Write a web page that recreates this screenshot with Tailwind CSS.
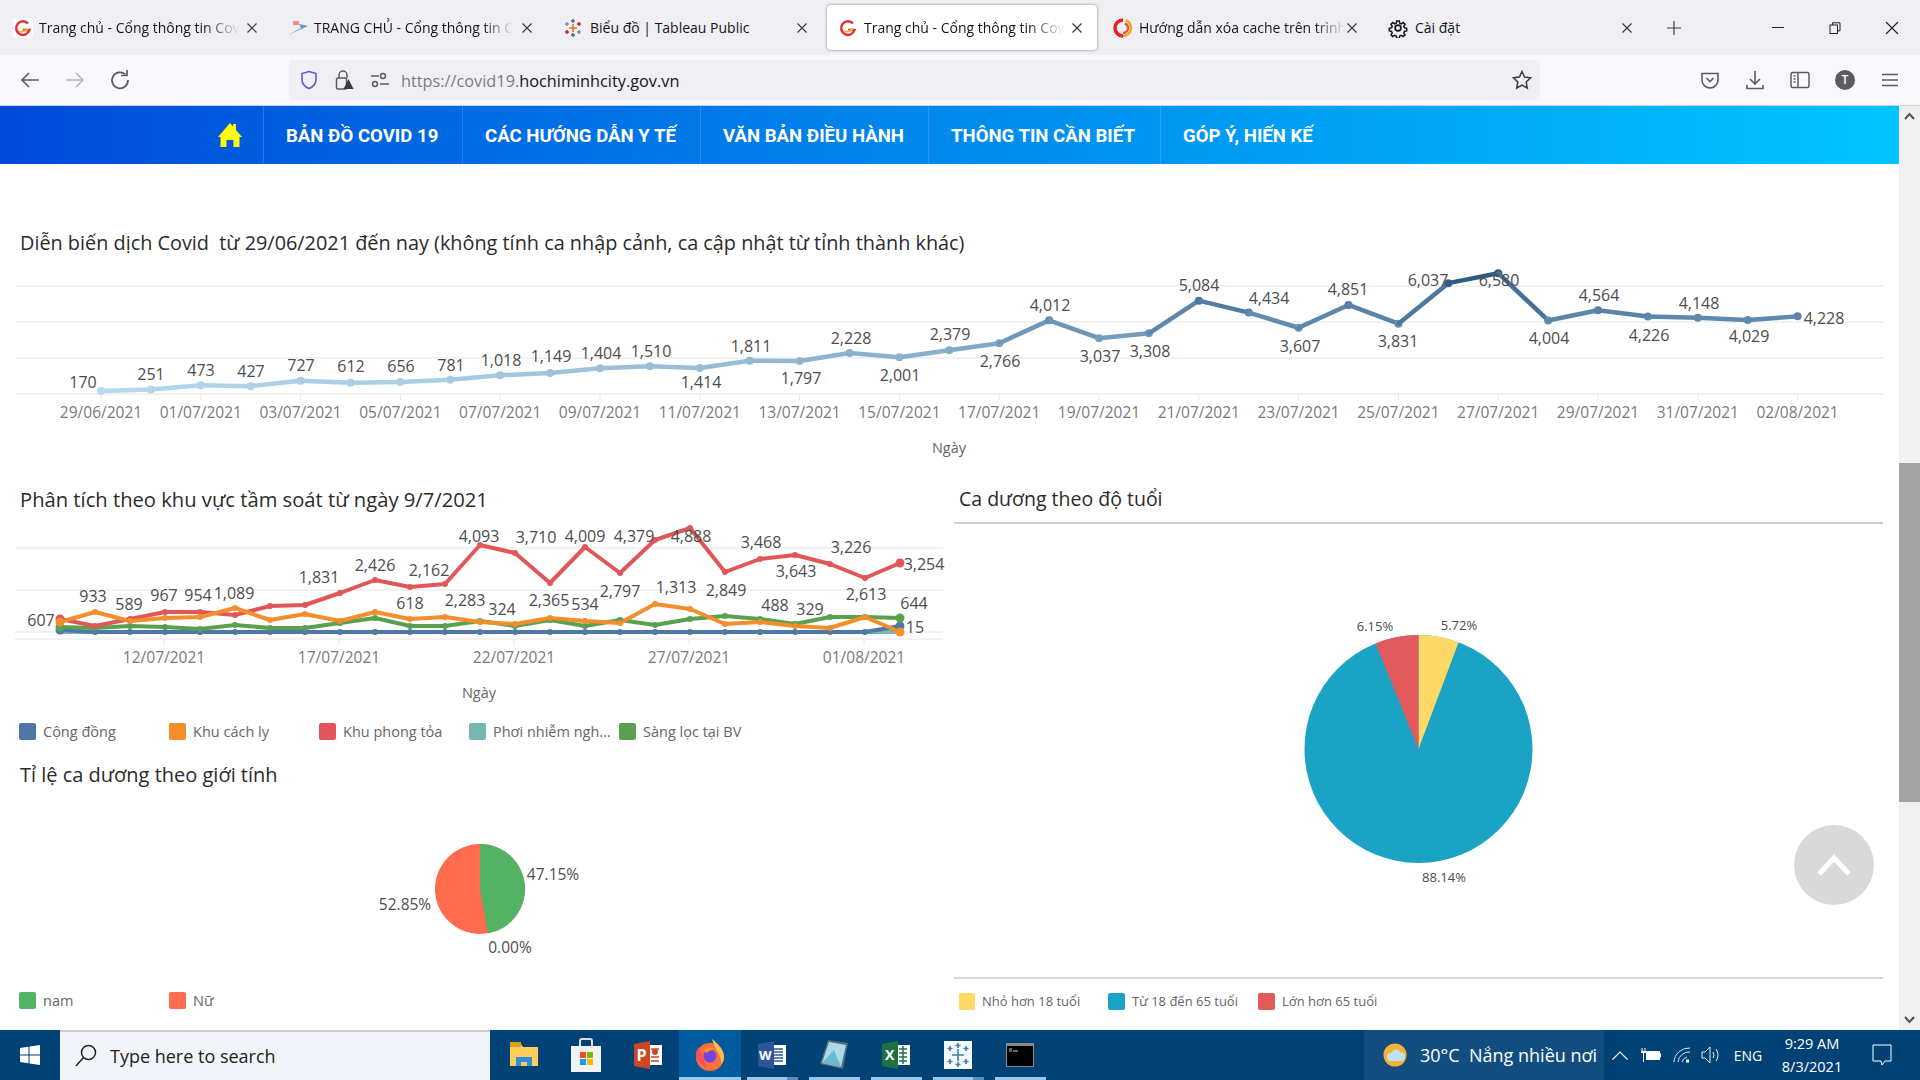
<!DOCTYPE html>
<html lang="vi">
<head>
  <meta charset="UTF-8" />
  <title>Trang chủ - Cổng thông tin Covid</title>
  <script src="https://cdn.jsdelivr.net/npm/@tailwindcss/browser@4"></script>
</head>
<body class="w-[1920px] h-[1080px] overflow-hidden flex flex-col bg-white font-['Open_Sans',sans-serif]">

  <!-- tab strip -->
  <div class="h-[55px] bg-[#f0f0f4] flex pl-[2px] text-[14px] text-[#15141a]">
    <div class="w-[270px] mr-[5px] h-[45px] mt-[5px] flex items-center pl-[11px] pr-[14px]">
      <svg class="w-[20px] h-[20px] shrink-0" viewBox="0 0 20 20"><rect width="20" height="20" rx="3" fill="#fff"/><path d="M15 5.500A6.800 6.800 0 1 0 16.500 12H10" fill="none" stroke="#e0323a" stroke-width="2.500"/><path d="M6 14q5 0 9-3" fill="none" stroke="#f2b632" stroke-width="1.800"/></svg>
      <div class="ml-[6px] whitespace-nowrap [mask-image:linear-gradient(to_right,black_82%,transparent)]">Trang chủ - Cổng thông tin Cov</div>
      <svg class="ml-auto w-[12px] h-[12px] shrink-0" viewBox="0 0 12 12"><path d="M1.500 1.500l9 9M10.500 1.500l-9 9" stroke="#3b3b40" stroke-width="1.200"/></svg>
    </div>
    <div class="w-[270px] mr-[5px] h-[45px] mt-[5px] flex items-center pl-[11px] pr-[14px]">
      <svg class="w-[20px] h-[20px] shrink-0" viewBox="0 0 20 20"><path d="M0 17L20 8l-9-2 2 4z" fill="#6f8fc9"/><path d="M5 3h6v4H5z" fill="#ef8b8f"/></svg>
      <div class="ml-[6px] whitespace-nowrap [mask-image:linear-gradient(to_right,black_85%,transparent)]">TRANG CHỦ - Cổng thông tin C</div>
      <svg class="ml-auto w-[12px] h-[12px] shrink-0" viewBox="0 0 12 12"><path d="M1.500 1.500l9 9M10.500 1.500l-9 9" stroke="#3b3b40" stroke-width="1.200"/></svg>
    </div>
    <div class="w-[270px] mr-[5px] h-[45px] mt-[5px] flex items-center pl-[11px] pr-[14px]">
      <svg class="w-[20px] h-[20px] shrink-0" viewBox="0 0 20 20" stroke-width="1.600" fill="none"><path d="M10 6v8M6 10h8" stroke="#e8762b"/><path d="M10 1v4M8 3h4M10 15v4M8 17h4" stroke="#5b6591"/><path d="M4 4v4M2 6h4M16 12v4M14 14h4" stroke="#7099a6"/><path d="M16 4v4M14 6h4M4 12v4M2 14h4" stroke="#c72037"/></svg>
      <div class="ml-[7px] whitespace-nowrap">Biểu đồ | Tableau Public</div>
      <svg class="ml-auto w-[12px] h-[12px] shrink-0" viewBox="0 0 12 12"><path d="M1.500 1.500l9 9M10.500 1.500l-9 9" stroke="#3b3b40" stroke-width="1.200"/></svg>
    </div>
    <div class="w-[270px] mr-[5px] h-[45px] mt-[5px] flex items-center pl-[11px] pr-[14px] bg-white rounded-[4px] shadow-[0_0_3px_rgba(0,0,0,0.45)]">
      <svg class="w-[20px] h-[20px] shrink-0" viewBox="0 0 20 20"><path d="M15 5.500A6.800 6.800 0 1 0 16.500 12H10" fill="none" stroke="#e0323a" stroke-width="2.500"/><path d="M6 14q5 0 9-3" fill="none" stroke="#f2b632" stroke-width="1.800"/></svg>
      <div class="ml-[6px] whitespace-nowrap [mask-image:linear-gradient(to_right,black_82%,transparent)]">Trang chủ - Cổng thông tin Cov</div>
      <svg class="ml-auto w-[12px] h-[12px] shrink-0" viewBox="0 0 12 12"><path d="M1.500 1.500l9 9M10.500 1.500l-9 9" stroke="#3b3b40" stroke-width="1.200"/></svg>
    </div>
    <div class="w-[270px] mr-[5px] h-[45px] mt-[5px] flex items-center pl-[11px] pr-[14px]">
      <svg class="w-[20px] h-[20px] shrink-0" viewBox="0 0 20 20" fill="none"><path d="M12.500 2.200A8 8 0 0 1 18 10a8 8 0 0 1-8 8" stroke="#f9a23b" stroke-width="2.500"/><path d="M10 18a8 8 0 0 1-8-8 8 8 0 0 1 8-8" stroke="#e8202a" stroke-width="3.500"/><path d="M10 15a5 5 0 0 0 5-5 5 5 0 0 0-3-4.500" stroke="#f0582b" stroke-width="2.500"/></svg>
      <div class="ml-[6px] whitespace-nowrap [mask-image:linear-gradient(to_right,black_85%,transparent)]">Hướng dẫn xóa cache trên trình</div>
      <svg class="ml-auto w-[12px] h-[12px] shrink-0" viewBox="0 0 12 12"><path d="M1.500 1.500l9 9M10.500 1.500l-9 9" stroke="#3b3b40" stroke-width="1.200"/></svg>
    </div>
    <div class="w-[270px] mr-[5px] h-[45px] mt-[5px] flex items-center pl-[11px] pr-[14px]">
      <svg class="w-[20px] h-[20px] shrink-0" viewBox="0 0 24 24" fill="none" stroke="#15141a" stroke-width="2"><circle cx="12" cy="12" r="3.500"/><path d="M10.300 2.500h3.400l.6 3 2.100.9 2.600-1.700 2.400 2.400-1.700 2.600.9 2.100 3 .6v3.400l-3 .6-.9 2.100 1.700 2.600-2.400 2.400-2.600-1.700-2.100.9-.6 3h-3.400l-.6-3-2.100-.9-2.600 1.700-2.400-2.400 1.700-2.600-.9-2.100-3-.6v-3.400l3-.6.9-2.100-1.700-2.600 2.400-2.400 2.600 1.700 2.100-.9z" transform="translate(1.200 1.200) scale(.9)"/></svg>
      <div class="ml-[7px] whitespace-nowrap">Cài đặt</div>
      <svg class="ml-auto w-[12px] h-[12px] shrink-0" viewBox="0 0 12 12"><path d="M1.500 1.500l9 9M10.500 1.500l-9 9" stroke="#3b3b40" stroke-width="1.200"/></svg>
    </div>
    <div class="w-[44px] flex items-center justify-center">
      <svg class="w-[16px] h-[16px]" viewBox="0 0 16 16"><path d="M8 1v14M1 8h14" stroke="#3b3b40" stroke-width="1.200"/></svg>
    </div>
    <div class="ml-auto flex h-[55px]">
      <div class="w-[57px] flex items-center justify-center"><div class="w-[12px] h-[1px] bg-[#222]"></div></div>
      <div class="w-[57px] flex items-center justify-center">
        <svg class="w-[12px] h-[12px]" viewBox="0 0 12 12" fill="none" stroke="#222"><rect x="1" y="3" width="7.500" height="8.500"/><path d="M3.500 3V.8H11v8H8.500"/></svg>
      </div>
      <div class="w-[57px] flex items-center justify-center">
        <svg class="w-[14px] h-[14px]" viewBox="0 0 14 14"><path d="M1 1l12 12M13 1L1 13" stroke="#222" stroke-width="1.100"/></svg>
      </div>
    </div>
  </div>

  <!-- toolbar -->
  <div class="h-[51px] bg-[#f9f9fb] border-b border-[#cfcfd8] flex pt-[5px]">
    <div class="w-[289px] shrink-0 pl-[7.500px] flex h-[40px]">
      <div class="w-[45px] flex items-center justify-center">
        <svg class="w-[20px] h-[20px]" viewBox="0 0 20 20" fill="none" stroke="#5b5b66" stroke-width="1.600"><path d="M19 10H2M9 3l-7 7 7 7"/></svg>
      </div>
      <div class="w-[45px] flex items-center justify-center">
        <svg class="w-[20px] h-[20px]" viewBox="0 0 20 20" fill="none" stroke="#b4b4ba" stroke-width="1.600"><path d="M1 10h17M11 3l7 7-7 7"/></svg>
      </div>
      <div class="w-[45px] flex items-center justify-center">
        <svg class="w-[20px] h-[20px]" viewBox="0 0 20 20" fill="none" stroke="#5b5b66" stroke-width="1.700"><path d="M15.500 4.500A8 8 0 1 0 18 10"/><path d="M11 5.500h6V0"/></svg>
      </div>
    </div>
    <div class="w-[1251px] shrink-0 h-[40px] rounded-[4px] bg-[#f0f0f4] flex items-center text-[16px]">
      <svg class="ml-[11px] w-[18px] h-[20px] shrink-0" viewBox="0 0 18 20" fill="none" stroke="#5b5bd6" stroke-width="1.600"><path d="M9 1.500l7 2v6c0 4.500-3 7.500-7 9-4-1.500-7-4.500-7-9v-6z"/></svg>
      <svg class="ml-[16px] w-[20px] h-[22px] shrink-0" viewBox="0 0 20 22" fill="none" stroke="#5b5b66" stroke-width="1.500"><path d="M5 9V6a4 4 0 0 1 8 0v3"/><rect x="2.500" y="9" width="10" height="11" rx="1.500"/><path d="M14.500 10l5 10h-10z" fill="#3b3b40" stroke="none"/></svg>
      <svg class="ml-[16px] w-[20px] h-[16px] shrink-0" viewBox="0 0 20 16" fill="none" stroke="#5b5b66" stroke-width="1.500"><circle cx="13" cy="4" r="2.500"/><path d="M1 4h8"/><circle cx="5" cy="12" r="2.500"/><path d="M10 12h9"/></svg>
      <div class="ml-[11px] pt-[2px] text-[#7b7b85] text-[16.300px] whitespace-nowrap">https://covid19.<span class="text-[#15141a]">hochiminhcity.gov.vn</span></div>
      <svg class="ml-auto mr-[8px] w-[20px] h-[20px] shrink-0" viewBox="0 0 20 20" fill="none" stroke="#3b3b40" stroke-width="1.500"><path d="M10 1.500l2.600 5.500 6 .8-4.400 4.200 1.100 6L10 15.100 4.700 18l1.100-6L1.400 7.800l6-.8z"/></svg>
    </div>
    <div class="ml-[147.500px] flex h-[40px]">
      <div class="w-[45px] flex items-center justify-center">
        <svg class="w-[20px] h-[20px]" viewBox="0 0 20 20" fill="none" stroke="#5b5b66" stroke-width="1.600"><path d="M2 3.500h16v6.500a8 8 0 0 1-16 0z"/><path d="M6.500 8l3.500 3.500L13.500 8"/></svg>
      </div>
      <div class="w-[45px] flex items-center justify-center">
        <svg class="w-[20px] h-[20px]" viewBox="0 0 20 20" fill="none" stroke="#5b5b66" stroke-width="1.600"><path d="M10 1v13M5 9l5 5 5-5M2 15v3.500h16V15"/></svg>
      </div>
      <div class="w-[45px] flex items-center justify-center">
        <svg class="w-[20px] h-[18px]" viewBox="0 0 20 18" fill="none" stroke="#5b5b66" stroke-width="1.500"><rect x="1" y="1.500" width="18" height="15" rx="2"/><path d="M8 1.500v15"/><path d="M3.500 5h2M3.500 8h2M3.500 11h2"/></svg>
      </div>
      <div class="w-[45px] flex items-center justify-center">
        <div class="w-[20px] h-[20px] rounded-full bg-[#5b5b66] text-white text-[12px] font-semibold flex items-center justify-center">T</div>
      </div>
      <div class="w-[45px] flex items-center justify-center">
        <svg class="w-[16px] h-[14px]" viewBox="0 0 16 14" fill="none" stroke="#5b5b66" stroke-width="1.500"><path d="M0 1.500h16M0 7h16M0 12.500h16"/></svg>
      </div>
    </div>
  </div>

  <div class="flex h-[925px]">
    <div class="w-[1899px] shrink-0 relative">

      <!-- site nav -->
      <nav class="h-[58px] bg-gradient-to-r from-[#0049d8] to-[#00c4ff] flex pl-[263px] text-white text-[18.600px] font-['Roboto',sans-serif] font-bold">
        <div class="-ml-[60px] w-[60px] flex items-center justify-center pr-[6px]">
          <svg class="w-[24px] h-[24px]" viewBox="0 0 24 24" fill="#ffff00"><path d="M12 0l3 3.500V1h3v6l6 7-2.500 0v10h-6v-7h-7v7h-6V14L0 14z"/></svg>
        </div>
        <a class="pl-[22px] pt-[4px] w-[199px] border-l border-white/15 flex items-center whitespace-nowrap">BẢN ĐỒ COVID 19</a>
        <a class="pl-[22px] pt-[4px] w-[238px] border-l border-white/15 flex items-center whitespace-nowrap">CÁC HƯỚNG DẪN Y TẾ</a>
        <a class="pl-[22px] pt-[4px] w-[228px] border-l border-white/15 flex items-center whitespace-nowrap">VĂN BẢN ĐIỀU HÀNH</a>
        <a class="pl-[22px] pt-[4px] w-[232px] border-l border-white/15 flex items-center whitespace-nowrap">THÔNG TIN CẦN BIẾT</a>
        <a class="pl-[22px] pt-[4px] border-l border-white/15 flex items-center whitespace-nowrap">GÓP Ý, HIẾN KẾ</a>
      </nav>

      <!-- chart 1 -->
      <h2 class="pt-[66px] pl-[20px] h-[96px] leading-[26px] text-[19.850px] text-[#2b2b2b] whitespace-pre">Diễn biến dịch Covid  từ 29/06/2021 đến nay (không tính ca nhập cảnh, ca cập nhật từ tỉnh thành khác)</h2>
      <svg id="trend" class="block w-[1899px] h-[223px]" viewBox="0 260 1899 223" font-family="Open Sans, sans-serif"></svg>

      <div class="flex">
        <div class="w-[950px] shrink-0">
          <!-- chart 2 -->
          <h2 class="pt-[3px] pl-[20px] h-[30px] leading-[26px] text-[20.200px] text-[#2b2b2b]">Phân tích theo khu vực tầm soát từ ngày 9/7/2021</h2>
          <svg id="area" class="block w-[950px] h-[209px]" viewBox="0 513 950 209" font-family="Open Sans, sans-serif"></svg>
          <div class="h-[20px] pl-[19px] flex text-[14.500px] text-[#666]">
            <div class="w-[150px] flex items-center"><span class="w-[17px] h-[17px] rounded-[2px] bg-[#4e79a7] mr-[7px]"></span>Cộng đồng</div>
            <div class="w-[150px] flex items-center"><span class="w-[17px] h-[17px] rounded-[2px] bg-[#f28e2b] mr-[7px]"></span>Khu cách ly</div>
            <div class="w-[150px] flex items-center"><span class="w-[17px] h-[17px] rounded-[2px] bg-[#e15759] mr-[7px]"></span>Khu phong tỏa</div>
            <div class="w-[150px] flex items-center"><span class="w-[17px] h-[17px] rounded-[2px] bg-[#76b7b2] mr-[7px]"></span>Phơi nhiễm ngh...</div>
            <div class="w-[150px] flex items-center"><span class="w-[17px] h-[17px] rounded-[2px] bg-[#59a14f] mr-[7px]"></span>Sàng lọc tại BV</div>
          </div>
          <!-- chart 3 -->
          <h2 class="mt-[20px] pl-[20px] h-[27px] leading-[26px] text-[20px] text-[#2b2b2b]">Tỉ lệ ca dương theo giới tính</h2>
          <svg class="block w-[950px] h-[202px]" viewBox="0 789 950 202" font-family="Open Sans, sans-serif">
            <circle cx="480" cy="889" r="45" fill="#ff6b4d"/>
            <path d="M480 889L480 844A45 45 0 0 1 488 933.300Z" fill="#52b365"/>
            <g font-size="15.500" fill="#4d4d4d" text-anchor="middle" dominant-baseline="central">
              <text x="553" y="874">47.15%</text>
              <text x="405" y="904">52.85%</text>
              <text x="510" y="947">0.00%</text>
            </g>
          </svg>
          <div class="h-[20px] pl-[19px] flex text-[14.500px] text-[#666]">
            <div class="w-[150px] flex items-center"><span class="w-[17px] h-[17px] rounded-[2px] bg-[#52b365] mr-[7px]"></span>nam</div>
            <div class="w-[150px] flex items-center"><span class="w-[17px] h-[17px] rounded-[2px] bg-[#ff6b4d] mr-[7px]"></span>Nữ</div>
          </div>
        </div>

        <div class="w-[933px] shrink-0 pl-[4px]">
          <!-- chart 4 -->
          <h2 class="pt-[3px] pl-[5px] h-[30px] leading-[26px] text-[19.500px] text-[#2b2b2b]">Ca dương theo độ tuổi</h2>
          <div class="mt-[9px] h-[2px] bg-[#d0d0d0]"></div>
          <svg class="block w-[929px] h-[453px]" viewBox="954 525 929 453" font-family="Open Sans, sans-serif">
            <circle cx="1418.500" cy="750" r="114" fill="#1ba3c6"/>
            <path d="M1418.500 750L1418.500 636A114 114 0 0 1 1458.600 643.300Z" fill="#ffd966"/>
            <path d="M1418.500 750L1375.600 644.400A114 114 0 0 1 1418.500 636Z" fill="#e35a5c"/>
            <g font-size="13" fill="#4d4d4d" text-anchor="middle" dominant-baseline="central">
              <text x="1375" y="626.500">6.15%</text>
              <text x="1459" y="626">5.72%</text>
              <text x="1444" y="878">88.14%</text>
            </g>
          </svg>
          <div class="h-[2px] bg-[#d8d8d8]"></div>
          <div class="mt-[13px] h-[20px] pl-[5px] flex text-[13px] text-[#666]">
            <div class="w-[149px] flex items-center"><span class="w-[16px] h-[17px] rounded-[2px] bg-[#ffd966] mr-[7px]"></span>Nhỏ hơn 18 tuổi</div>
            <div class="w-[150px] flex items-center"><span class="w-[17px] h-[17px] rounded-[2px] bg-[#1ba3c6] mr-[7px]"></span>Từ 18 đến 65 tuổi</div>
            <div class="w-[150px] flex items-center"><span class="w-[17px] h-[17px] rounded-[2px] bg-[#e35a5c] mr-[7px]"></span>Lớn hơn 65 tuổi</div>
          </div>
        </div>
      </div>

      <!-- back to top -->
      <div class="absolute left-[1794px] top-[719px] w-[80px] h-[80px] rounded-full bg-[#d9d9d9] flex items-center justify-center">
        <svg class="w-[36px] h-[22px]" viewBox="0 0 36 22" fill="none" stroke="#fff" stroke-width="5"><path d="M3 20L18 4l15 16"/></svg>
      </div>
    </div>

    <!-- scrollbar -->
    <div class="w-[21px] shrink-0 bg-[#f0f0f0] flex flex-col">
      <div class="h-[20px] flex items-center justify-center">
        <svg class="w-[11px] h-[8px]" viewBox="0 0 11 8" fill="none" stroke="#505050" stroke-width="2"><path d="M1 7l4.500-5L10 7"/></svg>
      </div>
      <div class="mt-[337px] h-[339px] bg-[#a3a3a3]"></div>
      <div class="mt-auto h-[20px] flex items-center justify-center">
        <svg class="w-[11px] h-[8px]" viewBox="0 0 11 8" fill="none" stroke="#505050" stroke-width="2"><path d="M1 1l4.500 5L10 1"/></svg>
      </div>
    </div>
  </div>

  <!-- taskbar -->
  <div class="h-[50px] bg-[#004275] flex text-white">
    <div class="w-[60px] flex items-center justify-center">
      <svg class="w-[20px] h-[20px]" viewBox="0 0 20 20" fill="#fff"><path d="M0 3l8.500-1.300v7.800H0zM9.500 1.500L20 0v9.500H9.500zM0 10.500h8.500v7.800L0 17zM9.500 10.500H20V20L9.500 18.500z"/></svg>
    </div>
    <div class="w-[430px] bg-[#f1f5f9] border-t-2 border-[#c8ccd0] flex items-center pl-[15px] text-[#222] text-[18px]">
      <svg class="w-[22px] h-[24px] shrink-0" viewBox="0 0 22 24" fill="none" stroke="#222" stroke-width="1.500"><circle cx="13.500" cy="8.500" r="7"/><path d="M8.500 13.500L1 22"/></svg>
      <span class="ml-[13px]">Type here to search</span>
    </div>
    <div class="w-[3px]"></div>

    <div class="w-[62px] flex items-center justify-center">
      <svg class="w-[28px] h-[26px]" viewBox="0 0 28 26"><path d="M0 2h11l2 3h15v19H0z" fill="#ffcd5c"/><path d="M0 0h11v5H0z" fill="#e0a010"/><path d="M6 24v-9h16v9h-5v-4h-6v4z" fill="#2f8fd8"/></svg>
    </div>
    <div class="w-[62px] flex items-center justify-center">
      <svg class="w-[30px] h-[34px]" viewBox="0 0 30 34"><path d="M9 8V3q0-2 2-2h8q2 0 2 2v5" fill="none" stroke="#ddd" stroke-width="2"/><path d="M0 8h30v26H0z" fill="#f3f3f3"/><path d="M9 14h6v6H9z" fill="#f25022"/><path d="M16 14h6v6h-6z" fill="#7fba00"/><path d="M9 21h6v6H9z" fill="#00a4ef"/><path d="M16 21h6v6h-6z" fill="#ffb900"/></svg>
    </div>
    <div class="w-[62px] flex items-center justify-center">
      <svg class="w-[28px] h-[28px]" viewBox="0 0 28 28"><path d="M14 4h14v20H14z" fill="#fff"/><path d="M17 8h8M17 16h8M17 20h8" stroke="#c8452a" stroke-width="1.500"/><circle cx="21" cy="11" r="3" fill="#c8452a"/><path d="M0 3l16-3v28l-16-3z" fill="#d04727"/><text x="2.500" y="20" font-family="Open Sans" font-weight="700" font-size="16" fill="#fff">P</text></svg>
    </div>
    <div class="w-[62px] flex items-center justify-center bg-[#005a9e] relative">
      <svg class="w-[30px] h-[32px]" viewBox="0 0 30 32"><circle cx="15" cy="18" r="14" fill="#ff7139"/><path d="M4 8c2 8 6 12 8 20-6-2-11-6-11-12 0-3 1-6 3-8z" fill="#ff4f5e"/><path d="M17 0c5 4 12 10 12 18 0 3-1 5-3 7 1-8-6-14-9-25z" fill="#ffbd4f"/><circle cx="15" cy="17" r="6.500" fill="#7542e5"/><path d="M9 11c3-3 8-3 11 0-3 0-6 0-8 3z" fill="#ff980e"/></svg>
      <div class="absolute bottom-0 inset-x-0 h-[3px] bg-[#99c7ec]"></div>
    </div>
    <div class="w-[62px] flex items-center justify-center relative">
      <svg class="w-[28px] h-[28px]" viewBox="0 0 28 28"><path d="M13 4h15v20H13z" fill="#fff"/><path d="M16 8h9M16 11h9M16 14h9M16 17h9M16 20h9" stroke="#2b579a" stroke-width="1.500"/><path d="M0 3l16-3v28l-16-3z" fill="#2b579a"/><text x="1" y="19" font-family="Open Sans" font-weight="700" font-size="13" fill="#fff">W</text></svg>
      <div class="absolute bottom-0 left-[6px] w-[40px] h-[3px] bg-[#99c7ec]"></div>
      <div class="absolute bottom-0 left-[46px] w-[11px] h-[3px] bg-[#5c8fb8]"></div>
    </div>
    <div class="w-[62px] flex items-center justify-center relative">
      <svg class="w-[28px] h-[30px]" viewBox="0 0 28 30"><path d="M8 0l20 3-5 26L0 24z" fill="#5b6d72"/><path d="M9 2l17 3-5 22L2 23z" fill="#a9dbe8"/><path d="M2 23L14 10l7 17z" fill="#6fb9cf"/></svg>
      <div class="absolute bottom-0 left-[6px] w-[51px] h-[3px] bg-[#99c7ec]"></div>
    </div>
    <div class="w-[62px] flex items-center justify-center relative">
      <svg class="w-[28px] h-[28px]" viewBox="0 0 28 28"><path d="M13 4h15v20H13z" fill="#fff"/><path d="M17 8h8M17 12h8M17 16h8M17 20h8M21 5v18" stroke="#1e7145" stroke-width="1.500"/><path d="M0 3l16-3v28l-16-3z" fill="#1e7145"/><text x="3" y="19" font-family="Open Sans" font-weight="700" font-size="14" fill="#fff">X</text></svg>
      <div class="absolute bottom-0 left-[6px] w-[51px] h-[3px] bg-[#99c7ec]"></div>
    </div>
    <div class="w-[62px] flex items-center justify-center relative">
      <svg class="w-[28px] h-[28px]" viewBox="0 0 28 28"><rect width="28" height="28" fill="#f4f8fb"/><path d="M14 8v12M8 14h12M14 2v5M11.500 4.500h5M14 21v5M11.500 23.500h5M6 5v5M3.500 7.500h5M22 5v5M19.500 7.500h5M6 18v5M3.500 20.500h5M22 18v5M19.500 20.500h5" stroke="#3a7fb0" stroke-width="1.600"/></svg>
      <div class="absolute bottom-0 left-[6px] w-[40px] h-[3px] bg-[#99c7ec]"></div>
      <div class="absolute bottom-0 left-[46px] w-[11px] h-[3px] bg-[#5c8fb8]"></div>
    </div>
    <div class="w-[62px] flex items-center justify-center relative">
      <svg class="w-[28px] h-[24px]" viewBox="0 0 28 24"><rect width="28" height="24" fill="#888"/><rect x="1" y="3" width="26" height="20" fill="#000"/><path d="M3 6h3M3 8h3M7 8h5" stroke="#ccc"/></svg>
      <div class="absolute bottom-0 left-[6px] w-[51px] h-[3px] bg-[#99c7ec]"></div>
    </div>

    <div class="ml-[313px] w-[240px] bg-[#124d7f] flex items-center pl-[19px] text-[18px] whitespace-pre">
      <svg class="w-[24px] h-[24px] shrink-0" viewBox="0 0 24 24"><circle cx="12" cy="12" r="11.500" fill="#f5b335"/><path d="M8 18a4 4 0 0 1 0-8 5 5 0 0 1 9-1 4.500 4.500 0 0 1 1 9z" fill="#bfe3f5"/></svg>
      <span class="ml-[13px]">30°C  Nắng nhiều nơi</span>
    </div>
    <div class="w-[32px] flex items-center justify-center">
      <svg class="w-[16px] h-[9px]" viewBox="0 0 16 9" fill="none" stroke="#e8eef4" stroke-width="1.200"><path d="M.5 8.500L8 1l7.500 7.500"/></svg>
    </div>
    <div class="w-[30px] flex items-center justify-center">
      <svg class="w-[20px] h-[14px]" viewBox="0 0 20 14"><path d="M1 0v3M4 0v3M0 3h5v2H3v9H2V5H0z" fill="#fff"/><path d="M1 0v3M4 0v3" stroke="#fff"/><rect x="5" y="3" width="14" height="9" fill="#fff"/><rect x="19" y="5.500" width="1" height="4" fill="#fff"/></svg>
    </div>
    <div class="w-[31px] flex items-center justify-center">
      <svg class="w-[18px] h-[16px]" viewBox="0 0 18 16" fill="none" stroke="#d8e4ee"><path d="M1 15A15 15 0 0 1 17 1M5 15A11 11 0 0 1 17 5M9 15a7 7 0 0 1 5-5"/><rect x="13" y="12.500" width="3" height="3" fill="#fff" stroke="none"/></svg>
    </div>
    <div class="w-[28px] flex items-center justify-center">
      <svg class="w-[20px] h-[18px]" viewBox="0 0 20 18" fill="none" stroke="#e8eef4"><path d="M1 6h3l5-5v16l-5-5H1zM12 6q2 3 0 6M15 3q4 6 0 12"/></svg>
    </div>
    <div class="w-[36px] ml-[5px] text-[14px] flex items-center justify-center">ENG</div>
    <div class="w-[90px] ml-[1px] flex flex-col items-center justify-center text-[14.500px] leading-[23px]">
      <div>9:29 AM</div>
      <div>8/3/2021</div>
    </div>
    <div class="flex-1 flex items-center justify-center pr-[14px]">
      <svg class="w-[20px] h-[22px]" viewBox="0 0 20 22" fill="none" stroke="#fff"><path d="M1 1h18v16h-6l-3 4-1-4H1z"/></svg>
    </div>
  </div>

  <script>
    var NS = 'http://www.w3.org/2000/svg';
    function add(parent, tag, attrs, txt) {
      var el = document.createElementNS(NS, tag);
      for (var k in attrs) el.setAttribute(k, attrs[k]);
      if (txt) el.textContent = txt;
      parent.appendChild(el);
      return el;
    }
    function grid(svg, ys, x1, x2) {
      ys.forEach(function (y) {
        add(svg, 'line', { x1: x1, x2: x2, y1: y, y2: y, stroke: '#f2f2f2', 'stroke-width': 2 });
      });
    }
    function labels(svg, list) {
      var g = add(svg, 'g', { 'font-size': 16, fill: '#4d4d4d', 'text-anchor': 'middle', 'dominant-baseline': 'central' });
      list.forEach(function (l) { add(g, 'text', { x: l[1], y: l[2] - 1 }, l[0]); });
    }
    function axis(svg, ticks, y) {
      var g = add(svg, 'g', { 'font-size': 15.5, fill: '#7a7a7a', 'text-anchor': 'middle', 'dominant-baseline': 'central' });
      ticks.forEach(function (t) { add(g, 'text', { x: t[0], y: y }, t[1]); });
    }

    // chart 1: daily cases, colour follows the value
    var trend = document.getElementById('trend');
    var cases = [170,251,473,427,727,612,656,781,1018,1149,1404,1510,1414,1811,1797,2228,2001,2379,2766,4012,3037,3308,5084,4434,3607,4851,3831,6037,6580,4004,4564,4226,4148,4029,4228];
    function caseColor(v) {
      var t = v / 6580;
      return 'rgb(' + Math.round(185 - 143 * t) + ',' + Math.round(221 - 134 * t) + ',' + Math.round(241 - 110 * t) + ')';
    }
    grid(trend, [286, 322, 358, 394], 15, 1883);
    var dates = ['29/06/2021','01/07/2021','03/07/2021','05/07/2021','07/07/2021','09/07/2021','11/07/2021','13/07/2021','15/07/2021','17/07/2021','19/07/2021','21/07/2021','23/07/2021','25/07/2021','27/07/2021','29/07/2021','31/07/2021','02/08/2021'];
    var trendTicks = dates.map(function (d, i) {
      var x = 101 + 99.8 * i;
      add(trend, 'line', { x1: x, x2: x, y1: 394, y2: 400, stroke: '#e8e8e8' });
      return [x, d];
    });
    cases.forEach(function (v, i) {
      var x = 101 + 49.9 * i, y = 394 - v * 0.01836;
      if (i) {
        var px = 101 + 49.9 * (i - 1), py = 394 - cases[i - 1] * 0.01836;
        add(trend, 'line', { x1: px, y1: py, x2: x, y2: y, stroke: caseColor((v + cases[i - 1]) / 2), 'stroke-width': 4.5, 'stroke-linecap': 'round' });
      }
      add(trend, 'circle', { cx: x, cy: y, r: 4, fill: caseColor(v) });
    });
    labels(trend, [['170',83,383],['251',151,375],['473',201,371],['427',251,372],['727',301,366],['612',351,367],['656',401,367],['781',451,366],['1,018',501,361],['1,149',551,357],['1,404',601,354],['1,510',651,352],['1,414',701,383],['1,811',751,347],['1,797',801,379],['2,228',851,339],['2,001',900,376],['2,379',950,335],['2,766',1000,362],['4,012',1050,306],['3,037',1100,357],['3,308',1150,352],['5,084',1199,286],['4,434',1269,299],['3,607',1300,347],['4,851',1348,290],['3,831',1398,342],['6,037',1428,281],['6,580',1499,281],['4,004',1549,339],['4,564',1599,296],['4,226',1649,336],['4,148',1699,304],['4,029',1749,337],['4,228',1824,319]]);
    axis(trend, trendTicks, 412);
    add(trend, 'text', { x: 949, y: 447, 'font-size': 14.5, fill: '#666', 'text-anchor': 'middle', 'dominant-baseline': 'central' }, 'Ngày');

    // chart 2: one line per screening area, page y values
    var area = document.getElementById('area');
    grid(area, [548, 590, 632, 639], 15, 943);
    var series = [
      ['#76b7b2', [632,632,632,632,632,632,632,632,632,632,632,632,632,632,632,632,632,632,632,632,632,632,632,632,632]],
      ['#4e79a7', [630,632,632,632,632,632,632,632,632,632,632,632,632,632,632,632,632,632,632,632,632,632,632,632,626]],
      ['#59a14f', [627,628,626,627,629,625,628,628,623,618,626,626,621,626,620,626,620,625,619,616,619,624,617,617,618]],
      ['#e15759', [619,626,619,612,612,615,606,605,593,580,587,584,545,553,583,547,573,540,528,572,559,555,564,578,563]],
      ['#f28e2b', [622,612,621,618,617,608,620,614,621,612,619,617,622,624,618,621,623,604,609,624,622,626,628,617,632]]
    ];
    series.forEach(function (s) {
      var pts = s[1].map(function (y, i) { return (60 + 35 * i) + ',' + y; }).join(' ');
      add(area, 'polyline', { points: pts, fill: 'none', stroke: s[0], 'stroke-width': 4, 'stroke-linejoin': 'round' });
    });
    series.forEach(function (s) {
      s[1].forEach(function (y, i) {
        if (s[0] !== '#76b7b2') add(area, 'circle', { cx: 60 + 35 * i, cy: y, r: i === 0 || i === 24 ? 4.5 : 3, fill: s[0] });
      });
    });
    var areaTicks = [[164,'12/07/2021'],[339,'17/07/2021'],[514,'22/07/2021'],[689,'27/07/2021'],[864,'01/08/2021']];
    areaTicks.forEach(function (t) { add(area, 'line', { x1: t[0], x2: t[0], y1: 639, y2: 645, stroke: '#e8e8e8' }); });
    labels(area, [['607',41,621],['933',93,597],['589',129,605],['967',164,596],['954',198,596],['1,089',234,594],['1,831',319,578],['2,426',375,566],['2,162',429,571],['618',410,604],['2,283',465,601],['4,093',479,537],['324',502,610],['3,710',536,538],['2,365',549,601],['534',585,605],['4,009',585,537],['4,379',634,537],['2,797',620,592],['1,313',676,588],['4,888',691,537],['2,849',726,591],['3,468',761,543],['488',775,606],['3,643',796,572],['329',810,610],['3,226',851,548],['2,613',866,595],['644',914,604],['3,254',924,565],['15',915,628]]);
    axis(area, areaTicks, 657);
    add(area, 'text', { x: 479, y: 692, 'font-size': 14.5, fill: '#666', 'text-anchor': 'middle', 'dominant-baseline': 'central' }, 'Ngày');
  </script>
</body>
</html>
